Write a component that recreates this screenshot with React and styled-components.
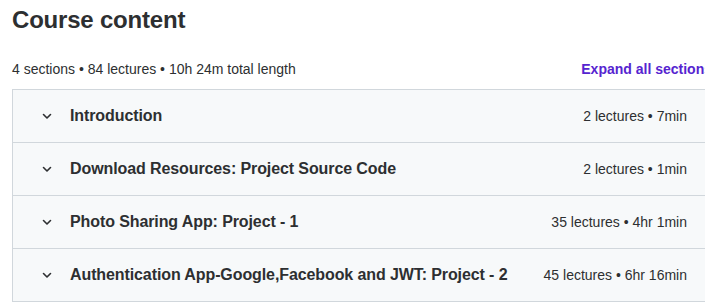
import React from "react";
import styled, { createGlobalStyle } from "styled-components";

const GlobalStyle = createGlobalStyle`
  html, body {
    margin: 0;
    padding: 0;
    background: #fff;
    overflow: hidden;
  }
  body {
    font-family: "Liberation Sans", Arial, sans-serif;
    color: #2d2f31;
  }
`;

const Page = styled.div`
  width: 700px;
  padding: 6px 0 0 12px;
`;

const Title = styled.h2`
  margin: 0;
  font-size: 24px;
  font-weight: 700;
  line-height: 28px;
  letter-spacing: -0.2px;
`;

const SummaryBar = styled.div`
  display: flex;
  align-items: center;
  justify-content: space-between;
  margin-top: 19px;
  height: 32px;
  padding-bottom: 4px;
`;

const Summary = styled.span`
  font-size: 14px;
`;

const ExpandButton = styled.button`
  border: 0;
  background: none;
  padding: 0;
  font-family: inherit;
  font-size: 14px;
  font-weight: 700;
  color: #5624d0;
  cursor: pointer;
`;

const Sections = styled.div`
  border: 1px solid #d1d7dc;
  border-bottom: 0;
`;

const SectionHeader = styled.div`
  display: flex;
  align-items: center;
  height: 52px;
  padding: 0 24px 0 22px;
  background: #f7f9fa;
  border-bottom: 1px solid #d1d7dc;
`;

const Chevron = styled.span`
  display: flex;
  align-items: center;
  justify-content: center;
  width: 24px;
  height: 24px;
  margin-right: 11px;
  color: #2d2f31;
`;

const SectionTitle = styled.span`
  flex: 1;
  font-size: 16px;
  font-weight: 700;
  letter-spacing: -0.1px;
`;

const SectionMeta = styled.span`
  font-size: 14px;
  white-space: nowrap;
  margin-left: 16px;
`;

const sections = [
  { title: "Introduction", meta: "2 lectures • 7min" },
  { title: "Download Resources: Project Source Code", meta: "2 lectures • 1min" },
  { title: "Photo Sharing App: Project - 1", meta: "35 lectures • 4hr 1min" },
  {
    title: "Authentication App-Google,Facebook and JWT: Project - 2",
    meta: "45 lectures • 6hr 16min",
  },
];

const ChevronDown = () => (
  <svg width="12" height="12" viewBox="0 0 12 12" fill="none">
    <path d="M2.5 4.5L6 8l3.5-3.5" stroke="currentColor" strokeWidth="1.6" strokeLinecap="round" strokeLinejoin="round" />
  </svg>
);

export default function App() {
  return (
    <Page>
      <GlobalStyle />
      <Title>Course content</Title>
      <SummaryBar>
        <Summary>4 sections • 84 lectures • 10h 24m total length</Summary>
        <ExpandButton>Expand all sections</ExpandButton>
      </SummaryBar>
      <Sections>
        {sections.map((s) => (
          <SectionHeader key={s.title}>
            <Chevron>
              <ChevronDown />
            </Chevron>
            <SectionTitle>{s.title}</SectionTitle>
            <SectionMeta>{s.meta}</SectionMeta>
          </SectionHeader>
        ))}
      </Sections>
    </Page>
  );
}
